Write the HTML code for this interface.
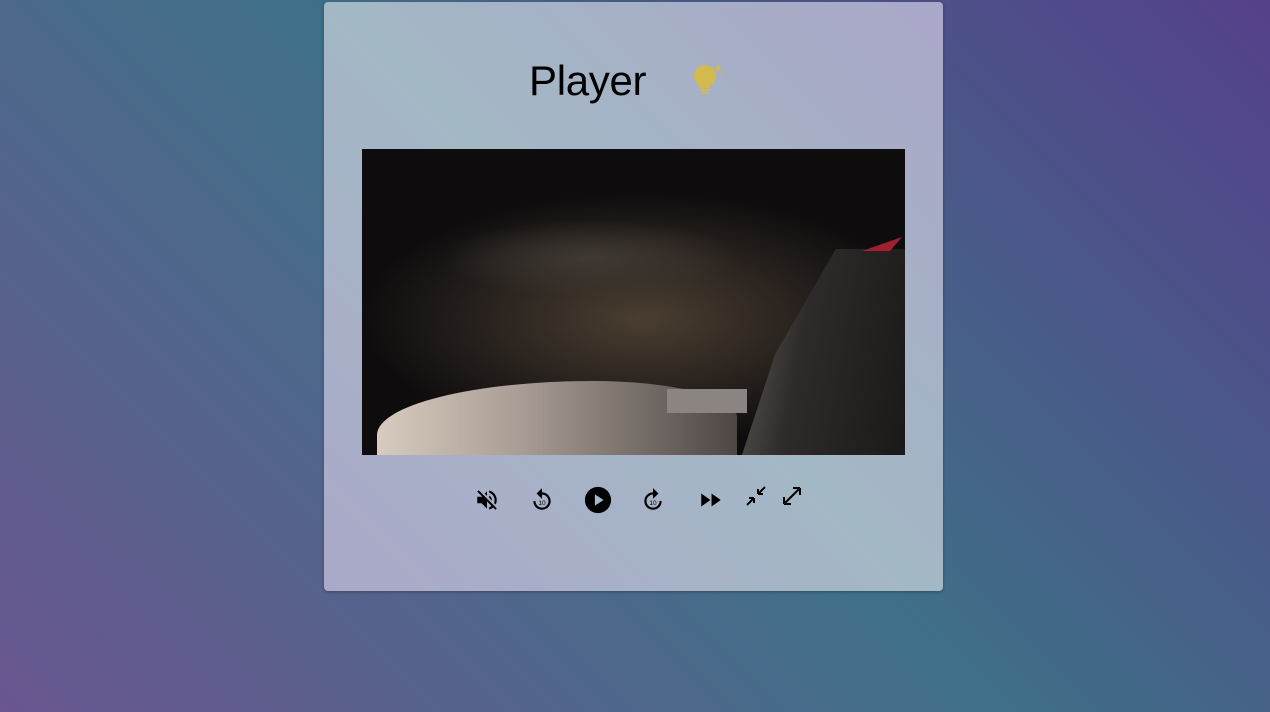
<!DOCTYPE html>
<html><head><style>
html,body{margin:0;width:1270px;height:712px;overflow:hidden}
body{background:linear-gradient(45deg,#6a5691 0%,#3f7088 50%,#55408a 100%);font-family:"Liberation Sans",sans-serif;position:relative}
.card{position:absolute;left:324px;top:2px;width:619px;height:589px;border-radius:4px;background:linear-gradient(45deg,#aba9c9 0%,#a3b8c5 50%,#aaa7c8 100%);box-shadow:0 1px 3px rgba(0,0,0,.3)}
h1{position:absolute;left:205px;top:54px;margin:0;font-size:42px;font-weight:normal;color:#000;letter-spacing:-0.3px;line-height:50px}
.video{position:absolute;left:38px;top:147px;width:543px;height:306px;background:#0e0c0d;overflow:hidden}
.ctl svg{position:absolute}
</style></head><body>
<div class="card">
<h1>Player</h1>
<svg style="position:absolute;left:366px;top:60px" width="36" height="36" viewBox="0 0 36 36">
<circle cx="15" cy="14" r="11" fill="#d4b94c"/><rect x="10" y="21" width="10" height="5" fill="#d4b94c"/>
<rect x="10" y="27" width="10" height="2" fill="#d4b94c"/><rect x="12" y="30" width="6" height="2" fill="#d4b94c"/>
<path d="M28 2l1.3 3.2 3.2 1.3-3.2 1.3-1.3 3.2-1.3-3.2-3.2-1.3 3.2-1.3z" fill="#d4b94c"/><circle cx="32" cy="12" r="1" fill="#d4b94c"/>
</svg>
<div class="video">
<div style="position:absolute;left:0;top:0;width:543px;height:306px;background:radial-gradient(ellipse 330px 150px at 280px 170px,#4a3e30,#231e1b 55%,#0e0c0d 85%)"></div>
<div style="position:absolute;left:80px;top:70px;width:300px;height:80px;background:radial-gradient(ellipse,#3f3933,transparent 70%)"></div>
<div style="position:absolute;left:15px;top:232px;width:360px;height:90px;border-radius:60% 40% 0 0;background:linear-gradient(90deg,#d8ccc0,#a89c94 40%,#4d4744)"></div>
<div style="position:absolute;left:305px;top:240px;width:80px;height:24px;background:#8a8582"></div>
<div style="position:absolute;left:370px;top:100px;width:173px;height:210px;background:linear-gradient(100deg,#6a6460,#2e2b2a 40%,#1a1918);clip-path:polygon(5% 100%,25% 50%,60% 0,100% 0,100% 100%)"></div>
<div style="position:absolute;left:500px;top:88px;width:40px;height:14px;background:#a02030;clip-path:polygon(0 100%,100% 0,70% 100%)"></div>
</div>
</div>
<div class="ctl">
<svg style="left:474px;top:487px" width="26" height="26" viewBox="0 0 24 24"><path d="M16.5 12c0-1.77-1.02-3.290-2.5-4.03v2.21l2.45 2.45c.03-.2.05-.41.05-.63zm2.5 0c0 .94-.2 1.82-.54 2.64l1.51 1.51C20.63 14.91 21 13.5 21 12c0-4.28-2.99-7.86-7-8.770v2.06c2.89.86 5 3.54 5 6.71zM4.27 3L3 4.27 7.730 9H3v6h4l5 5v-6.73l4.25 4.25c-.67.52-1.42.93-2.25 1.18v2.06c1.38-.31 2.63-.95 3.69-1.81L19.73 21 21 19.73l-9-9L4.27 3zM12 4L9.91 6.09 12 8.18V4z"/></svg>
<svg style="left:529px;top:486px" width="26" height="28" viewBox="0 0 24 24"><path d="M11.99 5V1l-5 5 5 5V7c3.31 0 6 2.69 6 6s-2.69 6-6 6-6-2.69-6-6h-2c0 4.42 3.58 8 8 8s8-3.58 8-8-3.58-8-8-8z"/><text x="12" y="16.5" font-size="6" text-anchor="middle" font-family="Liberation Sans">10</text></svg>
<svg style="left:583px;top:485px" width="30" height="30" viewBox="0 0 24 24"><circle cx="12" cy="12" r="10.5"/><path d="M9.5 7.5v9l7-4.5z" fill="#a3b9c6"/></svg>
<svg style="left:640px;top:486px" width="26" height="28" viewBox="0 0 24 24"><path d="M12.01 5V1l5 5-5 5V7c-3.31 0-6 2.69-6 6s2.69 6 6 6 6-2.69 6-6h2c0 4.42-3.58 8-8 8s-8-3.58-8-8 3.58-8 8-8z"/><text x="12" y="16.5" font-size="6" text-anchor="middle" font-family="Liberation Sans">10</text></svg>
<svg style="left:697px;top:487px" width="28" height="26" viewBox="0 0 24 24"><path d="M3 6v12l8.5-6zM12.5 6v12l8.5-6z"/></svg>
<svg style="left:744px;top:484px" width="24" height="24" viewBox="0 0 24 24"><path d="M3 21l7-7M10 14v5M10 14H5M21 3l-7 7M14 10V5M14 10h5" stroke="#000" stroke-width="2" fill="none"/></svg>
<svg style="left:780px;top:484px" width="24" height="24" viewBox="0 0 24 24"><path d="M4 20L20 4M4 20v-7M4 20h7M20 4v7M20 4h-7" stroke="#000" stroke-width="2" fill="none"/></svg>
</div>
</body></html>
